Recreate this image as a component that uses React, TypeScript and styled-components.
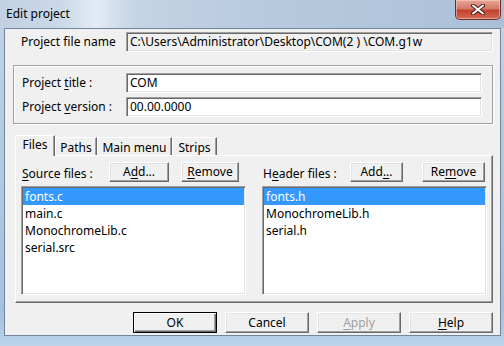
import styled, { createGlobalStyle, css } from 'styled-components';

const GlobalStyle = createGlobalStyle`
	* {
		box-sizing: border-box;
	}
	body {
		margin: 0;
		font-family: 'Noto Sans', 'Liberation Sans', sans-serif;
		font-size: 12px;
		color: #000;
	}
`;

const sunken = css`
	border-style: solid;
	border-width: 1px;
	border-color: #a0a0a0 #fff #fff #a0a0a0;
	box-shadow: inset 1px 1px 0 #696969, inset -1px -1px 0 #e3e3e3;
`;

const raised = css`
	background: #f0f0f0;
	border: 1px solid;
	border-color: #fff #696969 #696969 #fff;
	box-shadow: inset -1px -1px 0 #a0a0a0, inset 1px 1px 0 #e3e3e3;
`;

const Window = styled.div`
	width: 504px;
	height: 346px;
	display: flex;
	flex-direction: column;
	overflow: hidden;
	background: linear-gradient(180deg, #c3d3e6 0%, #b4cae1 40%, #a4c1df 90%, #bcd3ea 100%);
`;

const TitleBar = styled.div`
	height: 28px;
	display: flex;
	justify-content: space-between;
	align-items: flex-start;
	padding-right: 3px;
	background: linear-gradient(
		90deg,
		#c2d1e3 0%,
		#cad8e8 12%,
		#e4ebf4 19%,
		#c4d3e5 27%,
		#b6c9de 55%,
		#abc0d8 100%
	);
`;

const Title = styled.span`
	padding: 6px 0 0 6px;
	font-size: 12px;
	line-height: 16px;
`;

const CloseButton = styled.div`
	width: 46px;
	height: 20px;
	border: 1px solid #6b2d28;
	border-top: none;
	border-radius: 0 0 5px 5px;
	display: flex;
	align-items: center;
	justify-content: center;
	background: linear-gradient(180deg, #e7a597 0%, #d47a68 45%, #c2432f 55%, #d36a52 100%);
	box-shadow: inset 0 0 0 1px rgba(255, 220, 210, 0.5);
`;

const Client = styled.div`
	flex: 1;
	margin: 0 3px 10px 4px;
	border: 1px solid #71859c;
	background: #f0f0f0;
	padding: 3px 7px 0 8px;
	display: flex;
	flex-direction: column;
`;

const FieldRow = styled.div<{ $label: number }>`
	display: grid;
	grid-template-columns: ${(p) => p.$label}px 1fr;
	align-items: center;
	height: 20px;
`;

const TopRow = styled(FieldRow)`
	padding-left: 8px;
`;

const Label = styled.span`
	white-space: nowrap;
	line-height: 16px;
`;

const Edit = styled.div<{ $readOnly?: boolean }>`
	${sunken};
	height: 20px;
	padding: 0 3px;
	line-height: 18px;
	background: ${(p) => (p.$readOnly ? '#f0f0f0' : '#fff')};
	white-space: nowrap;
	overflow: hidden;
`;

const GroupBox = styled.div`
	margin-top: 13px;
	border: 1px solid #a0a0a0;
	box-shadow: inset 1px 1px 0 #fff, 1px 1px 0 #fff;
	padding: 7px 10px 6px 8px;
	display: flex;
	flex-direction: column;
	gap: 4px;
`;

const Mnemonic = styled.u`
	text-decoration-thickness: 1px;
	text-underline-offset: 2px;
`;

const TabArea = styled.div`
	margin: 11px 0 0 2px;
	display: flex;
	flex-direction: column;
`;

const TabStrip = styled.div`
	display: flex;
	align-items: flex-end;
	height: 20px;
	position: relative;
	z-index: 1;
`;

const Tab = styled.div<{ $active?: boolean; $w: number }>`
	width: ${(p) => p.$w}px;
	height: ${(p) => (p.$active ? 21 : 18)}px;
	margin-bottom: ${(p) => (p.$active ? -1 : 0)}px;
	padding-top: ${(p) => (p.$active ? 1 : 2)}px;
	text-align: center;
	background: #f0f0f0;
	border-top: 1px solid #fff;
	border-left: 1px solid #fff;
	border-right: 1px solid #696969;
	box-shadow: inset -1px 0 0 #a0a0a0;
	line-height: 16px;
	white-space: nowrap;
`;

const TabPanel = styled.div`
	height: 148px;
	border: 1px solid;
	border-color: #fff #696969 #696969 #fff;
	box-shadow: inset -1px -1px 0 #a0a0a0;
	padding: 6px 5px 7px 5px;
	display: grid;
	grid-template-columns: 1fr 1fr;
	gap: 16px;
`;

const FileColumn = styled.div`
	display: flex;
	flex-direction: column;
	gap: 4px;
`;

const ColumnHead = styled.div`
	height: 20px;
	display: flex;
	align-items: center;
`;

const HeadLabel = styled(Label)`
	width: 88px;
	padding: 3px 0 0 1px;
`;

const SmallButton = styled.div<{ $w: number; $gap?: number }>`
	${raised};
	width: ${(p) => p.$w}px;
	height: 20px;
	margin-left: ${(p) => p.$gap ?? 0}px;
	display: flex;
	align-items: center;
	justify-content: center;
	line-height: 16px;
`;

const ListBox = styled.div`
	${sunken};
	background: #fff;
	flex: 1;
	padding: 1px;
`;

const ListItem = styled.div<{ $selected?: boolean }>`
	height: 17px;
	line-height: 17px;
	padding-left: 2px;
	white-space: nowrap;
	background: ${(p) => (p.$selected ? '#3399ff' : 'transparent')};
	color: ${(p) => (p.$selected ? '#fff' : '#000')};
`;

const Footer = styled.div`
	margin-top: 9px;
	display: flex;
	justify-content: flex-end;
	gap: 8px;
`;

const DialogButton = styled.div<{ $default?: boolean; $disabled?: boolean }>`
	${raised};
	width: 84px;
	height: 21px;
	display: flex;
	align-items: center;
	justify-content: center;
	line-height: 16px;
	color: ${(p) => (p.$disabled ? '#a0a0a0' : '#000')};
	${(p) =>
		p.$default &&
		css`
			border-color: #000;
			box-shadow: inset 1px 1px 0 #fff, inset -1px -1px 0 #696969, inset -2px -2px 0 #a0a0a0;
		`}
`;

const tabs = [
	{ name: 'Files', w: 40 },
	{ name: 'Paths', w: 42 },
	{ name: 'Main menu', w: 75 },
	{ name: 'Strips', w: 45 },
];
const sourceFiles = ['fonts.c', 'main.c', 'MonochromeLib.c', 'serial.src'];
const headerFiles = ['fonts.h', 'MonochromeLib.h', 'serial.h'];

function CloseGlyph() {
	return (
		<svg width="14" height="11" viewBox="0 0 14 11">
			<path d="M2 1.5 L12 9.5 M12 1.5 L2 9.5" stroke="#4a1f1a" strokeWidth="4" strokeLinecap="round" />
			<path d="M2 1.5 L12 9.5 M12 1.5 L2 9.5" stroke="#fff" strokeWidth="2" strokeLinecap="round" />
		</svg>
	);
}

function EditProject() {
	return (
		<Window>
			<TitleBar>
				<Title>Edit project</Title>
				<CloseButton>
					<CloseGlyph />
				</CloseButton>
			</TitleBar>
			<Client>
				<TopRow $label={105}>
					<Label>Project file name</Label>
					<Edit $readOnly>C:\Users\Administrator\Desktop\COM(2 ) \COM.g1w</Edit>
				</TopRow>
				<GroupBox>
					<FieldRow $label={104}>
						<Label>
							Project <Mnemonic>t</Mnemonic>itle :
						</Label>
						<Edit>COM</Edit>
					</FieldRow>
					<FieldRow $label={104}>
						<Label>
							Project <Mnemonic>v</Mnemonic>ersion :
						</Label>
						<Edit>00.00.0000</Edit>
					</FieldRow>
				</GroupBox>
				<TabArea>
					<TabStrip>
						{tabs.map((t, i) => (
							<Tab key={t.name} $w={t.w} $active={i === 0}>
								{t.name}
							</Tab>
						))}
					</TabStrip>
					<TabPanel>
						<FileColumn>
							<ColumnHead>
								<HeadLabel>
									<Mnemonic>S</Mnemonic>ource files :
								</HeadLabel>
								<SmallButton $w={60}>
									A<Mnemonic>d</Mnemonic>d...
								</SmallButton>
								<SmallButton $w={58} $gap={12}>
									<Mnemonic>R</Mnemonic>emove
								</SmallButton>
							</ColumnHead>
							<ListBox>
								{sourceFiles.map((f, i) => (
									<ListItem key={f} $selected={i === 0}>
										{f}
									</ListItem>
								))}
							</ListBox>
						</FileColumn>
						<FileColumn>
							<ColumnHead>
								<HeadLabel>
									H<Mnemonic>e</Mnemonic>ader files :
								</HeadLabel>
								<SmallButton $w={53}>
									Add<Mnemonic>..</Mnemonic>.
								</SmallButton>
								<SmallButton $w={63} $gap={19}>
									Re<Mnemonic>m</Mnemonic>ove
								</SmallButton>
							</ColumnHead>
							<ListBox>
								{headerFiles.map((f, i) => (
									<ListItem key={f} $selected={i === 0}>
										{f}
									</ListItem>
								))}
							</ListBox>
						</FileColumn>
					</TabPanel>
				</TabArea>
				<Footer>
					<DialogButton $default>OK</DialogButton>
					<DialogButton>Cancel</DialogButton>
					<DialogButton $disabled>
						<Mnemonic>A</Mnemonic>pply
					</DialogButton>
					<DialogButton>
						<Mnemonic>H</Mnemonic>elp
					</DialogButton>
				</Footer>
			</Client>
		</Window>
	);
}

export default function App() {
	return (
		<>
			<GlobalStyle />
			<EditProject />
		</>
	);
}
